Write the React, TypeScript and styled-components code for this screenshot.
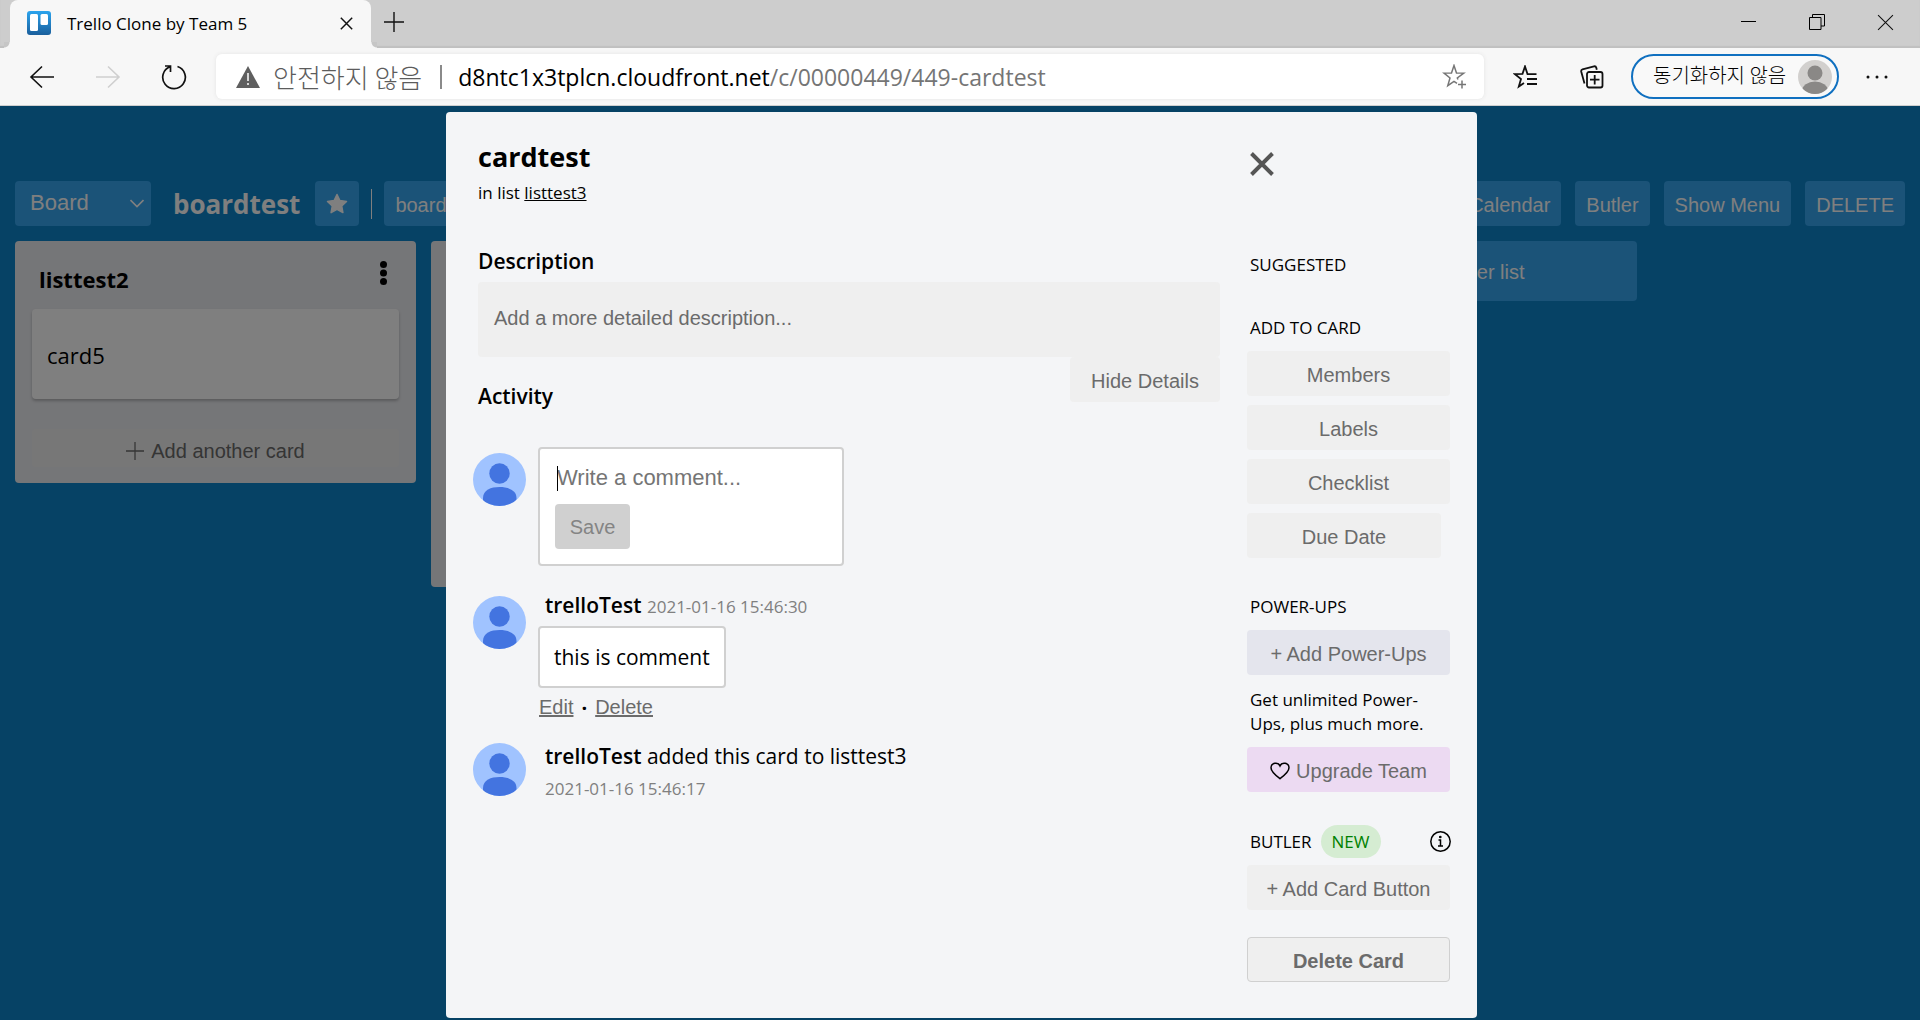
import React from 'react';
import styled, { createGlobalStyle, css } from 'styled-components';

const ui = `"Segoe UI", "Open Sans", "Noto Sans", "Noto Sans CJK KR", sans-serif`;
const arial = `"Liberation Sans", Arial, sans-serif`;

const GlobalStyle = createGlobalStyle`
  *, *::before, *::after { box-sizing: border-box; }
  body { margin: 0; font-family: ${ui}; color: #000; }
  h1, h2, h3, p { margin: 0; padding: 0; }
  button, input, select, textarea { font-family: ${arial}; font-size: 20px; margin: 0; }
  svg { display: block; flex: none; }
`;

/* ---------- browser frame ---------- */

const Window = styled.div`
  display: flex;
  flex-direction: column;
  height: 100vh;
  min-height: 0;
  overflow: hidden;
`;

const TabStrip = styled.div`
  display: flex;
  align-items: stretch;
  height: 48px;
  padding-left: 10px;
  background: #cdcdcd;
  box-shadow: inset 0 -2px 1px #c0c0c0;
`;

const Tab = styled.div`
  position: relative;
  display: flex;
  align-items: center;
  width: 361px;
  padding: 0 12px 2px 17px;
  gap: 16px;
  background: #f7f7f7;
  border-radius: 8px 8px 0 0;
  font-size: 17px;

  &::before, &::after {
    content: "";
    position: absolute;
    bottom: 0;
    width: 6px;
    height: 6px;
  }
  &::before {
    left: -6px;
    background: radial-gradient(circle at 0 0, #c6c6c6 5px, #f7f7f7 6px);
  }
  &::after {
    right: -6px;
    background: radial-gradient(circle at 100% 0, #c6c6c6 5px, #f7f7f7 6px);
  }
`;

const TabTitle = styled.span`
  flex: 1;
  white-space: nowrap;
`;

const IconButton = styled.button<{ $w: number; $h?: number }>`
  display: flex;
  align-items: center;
  justify-content: center;
  flex: none;
  width: ${(p) => p.$w}px;
  height: ${(p) => p.$h ?? 44}px;
  padding: 0;
  border: 0;
  background: none;
  color: #111;
`;

const WindowControls = styled.div`
  display: flex;
  margin-left: auto;
`;

const Toolbar = styled.div`
  display: flex;
  align-items: center;
  height: 58px;
  padding: 0 5px 0 9px;
  background: #f7f7f7;
  border-bottom: 1px solid #cfcfcf;
`;

const NavButtons = styled.div`
  display: flex;
  width: 207px;
`;

const AddressBar = styled.div`
  display: flex;
  align-items: center;
  flex: 1;
  height: 45px;
  padding: 0 6px 0 20px;
  background: #fff;
  border-radius: 6px;
  box-shadow: 0 0 4px #e4e4e4;
  font-size: 23px;
  white-space: nowrap;
`;

const Security = styled.span`
  margin-left: 13px;
  padding-right: 18px;
  border-right: 2px solid #8a8a8a;
  font-family: "Noto Sans CJK KR", sans-serif;
  font-weight: 300;
  font-size: 26px;
  line-height: 24px;
  color: #5c5c5c;
`;

const Url = styled.span`
  flex: 1;
  margin-left: 16px;
  color: #757575;
`;

const Host = styled.span`
  color: #000;
`;

const ToolbarIcons = styled.div`
  display: flex;
  padding: 0 6px 0 8px;
`;

const Profile = styled.button`
  display: flex;
  align-items: center;
  justify-content: space-between;
  width: 208px;
  height: 45px;
  padding: 0 5px 0 20px;
  border: 2px solid #1070c0;
  border-radius: 23px;
  background: #f9f9f9;
  font-family: "Noto Sans CJK KR", sans-serif;
  font-weight: 300;
  font-size: 20px;
  color: #000;
  white-space: nowrap;
`;

const ProfileName = styled.span`
  padding-bottom: 4px;
`;

/* ---------- board ---------- */

const Viewport = styled.div`
  position: relative;
  flex: 1;
  min-height: 0;
  overflow: hidden;
  background: #0c84ca;
`;

const BoardHeader = styled.header`
  display: flex;
  align-items: center;
  padding: 75px 15px 15px;
  white-space: nowrap;
`;

const translucent = css`
  border: 0;
  border-radius: 4px;
  background: #36a6f0;
  color: #fff;
`;

const SelectWrap = styled.div`
  position: relative;
  width: 136px;
  svg {
    position: absolute;
    right: 7px;
    top: 18px;
    pointer-events: none;
  }
`;

const BoardSelect = styled.select`
  ${translucent}
  appearance: none;
  width: 100%;
  height: 45px;
  padding: 0 15px 3px;
  font-size: 22px;
`;

const BoardName = styled.h1`
  margin: 0 15px 0 22px;
  padding-top: 2px;
  font-size: 26px;
  line-height: 43px;
  font-weight: 700;
  color: #fff;
`;

const BoardButton = styled.button<{ $wide?: boolean }>`
  ${translucent}
  display: flex;
  align-items: center;
  width: ${(p) => (p.$wide ? '120px' : 'auto')};
  height: 45px;
  padding: 3px 11px 0;
`;

const StarButton = styled(BoardButton)`
  padding: 0 11px;
`;

const Divider = styled.span`
  width: 1px;
  height: 30px;
  margin: 0 12px;
  background: #fff;
`;

const HeaderRight = styled.div`
  display: flex;
  gap: 14px;
  margin-left: auto;
`;

const Lists = styled.main`
  display: flex;
  align-items: flex-start;
  gap: 15px;
  padding: 0 15px;
`;

const List = styled.section<{ $tall?: boolean }>`
  flex: none;
  width: 401px;
  min-height: ${(p) => (p.$tall ? 346 : 241)}px;
  padding: 16px 17px;
  border-radius: 4px;
  background: #ebecf0;
`;

const ListTop = styled.div`
  display: flex;
  justify-content: space-between;
  height: 52px;
  padding: 4px 12px 0 7px;
`;

const ListTitle = styled.h2`
  font-size: 22px;
  line-height: 36px;
  font-weight: 700;
`;

const ListCard = styled.article`
  height: 90px;
  padding: 0 15px;
  border-radius: 4px;
  background: #fff;
  box-shadow: 0 2px 3px #b4b5b8;
  font-size: 22px;
  line-height: 92px;
`;

const AddCard = styled.button`
  display: flex;
  align-items: center;
  justify-content: center;
  gap: 7px;
  width: 100%;
  height: 38px;
  margin-top: 30px;
  padding: 6px 0 0;
  border: 0;
  border-radius: 4px;
  background: #efefef;
  color: #6a6a6a;
`;

const AddList = styled.button`
  ${translucent}
  width: 374px;
  height: 60px;
  padding: 2px 6px 0 0;
`;

/* ---------- card dialog ---------- */

const Backdrop = styled.div`
  position: absolute;
  inset: 0;
  display: flex;
  align-items: flex-start;
  justify-content: center;
  padding: 6px 0 0 3px;
  background: rgba(0, 0, 0, 0.5);
`;

const Dialog = styled.div`
  display: flex;
  gap: 27px;
  width: 1031px;
  padding: 30px 27px 36px 32px;
  border-radius: 4px;
  background: #f4f5f7;
`;

const MainColumn = styled.div`
  flex: 1;
  min-width: 0;
`;

const CardTitle = styled.h2`
  font-size: 27px;
  line-height: 30px;
  font-weight: 700;
`;

const InList = styled.p`
  margin: 9px 0 41px;
  font-size: 17px;
  line-height: 24px;
  a { color: inherit; }
`;

const SectionTitle = styled.h3`
  font-size: 21px;
  line-height: 30px;
  font-weight: 600;
`;

const Description = styled.textarea`
  display: block;
  width: 100%;
  height: 75px;
  margin-top: 6px;
  padding: 25px 16px;
  border: 0;
  border-radius: 4px;
  background: #efefef;
  resize: none;
  &::placeholder { color: #6b6b6b; }
`;

const ActivityHead = styled.div`
  display: flex;
  justify-content: space-between;
  align-items: flex-start;
  margin-bottom: 36px;
  ${SectionTitle} { padding-top: 24px; }
`;

const PlainButton = styled.button<{ $tone?: string; $short?: boolean; $strong?: boolean }>`
  display: flex;
  align-items: center;
  justify-content: center;
  gap: 6px;
  width: ${(p) => (p.$short ? '194px' : '100%')};
  height: 45px;
  padding: 3px 0 0;
  border: ${(p) => (p.$strong ? '1px solid #d0d0d0' : '0')};
  border-radius: 4px;
  background: ${(p) => p.$tone ?? '#efefef'};
  color: #6b6b6b;
  font-weight: ${(p) => (p.$strong ? 700 : 400)};
  white-space: nowrap;
  svg { color: #000; }
`;

const HideDetails = styled(PlainButton)`
  width: 150px;
`;

const Entry = styled.div`
  display: flex;
  gap: 12px;
  margin-left: -5px;
  > svg { margin-top: 6px; }
`;

const EntryBody = styled.div<{ $lower?: boolean }>`
  padding-top: ${(p) => (p.$lower ? 4 : 0)}px;
`;

const CommentForm = styled.form`
  position: relative;
  width: 306px;
  height: 119px;
  margin-bottom: 24px;
  padding: 15px;
  border: 2px solid #d0d0d0;
  border-radius: 4px;
  background: #fff;
`;

const Caret = styled.span`
  position: absolute;
  left: 17px;
  top: 17px;
  width: 1px;
  height: 25px;
  background: #000;
`;

const CommentInput = styled.input`
  display: block;
  width: 100%;
  height: 28px;
  margin-bottom: 12px;
  padding: 0 2px;
  border: 0;
  outline: 0;
  font-size: 22px;
  &::placeholder { color: #757575; }
`;

const Save = styled.button`
  width: 75px;
  height: 45px;
  padding: 1px 0 0;
  border: 0;
  border-radius: 4px;
  background: #d0d0d0;
  color: #848484;
`;

const Line = styled.p`
  padding-left: 7px;
  font-size: 21px;
  line-height: 30px;
  white-space: nowrap;
  strong { font-weight: 600; }
`;

const Time = styled.time`
  font-size: 17px;
  line-height: 24px;
  color: #808080;
`;

const TimeRow = styled.p`
  margin-top: 6px;
  padding-left: 7px;
  line-height: 24px;
`;

const Bubble = styled.p`
  width: fit-content;
  margin: 6px 0;
  padding: 14px;
  border: 2px solid #d0d0d0;
  border-radius: 4px;
  background: #fff;
  font-size: 21px;
  line-height: 30px;
`;

const Actions = styled.div`
  display: flex;
  align-items: center;
  gap: 8px;
  height: 26px;
  margin-bottom: 17px;
  padding-left: 1px;
`;

const TextButton = styled.button`
  padding: 0;
  border: 0;
  background: none;
  color: #6b6b6b;
  text-decoration: underline;
`;

const Dot = styled.span`
  font-weight: 700;
  font-size: 20px;
`;

const Side = styled.aside`
  width: 203px;
`;

const Close = styled.button`
  display: flex;
  align-items: center;
  width: 44px;
  height: 44px;
  margin-bottom: 67px;
  padding: 0 0 0 3px;
  border: 0;
  background: none;
  color: #555;
`;

const SideLabel = styled.h3`
  padding-left: 3px;
  font-size: 17px;
  line-height: 24px;
  font-weight: 400;
`;

const Group = styled.div<{ $gap: number }>`
  display: flex;
  flex-direction: column;
  gap: 9px;
  margin-bottom: ${(p) => p.$gap}px;
  ${SideLabel} { margin-bottom: 2px; }
`;

const Note = styled.p`
  padding: 4px 12px 2px 3px;
  font-size: 17px;
  line-height: 24px;
`;

const ButlerRow = styled.div`
  display: flex;
  align-items: center;
  height: 33px;
  margin: 0 -1px 7px 0;
  svg { margin-left: auto; }
`;

const NewBadge = styled.span`
  margin-left: 9px;
  padding: 0 11px;
  border-radius: 17px;
  background: #d5ecd2;
  color: #008000;
  font-size: 17px;
  line-height: 33px;
`;

const Spacer = styled.div`
  height: 27px;
`;

/* ---------- drawings ---------- */

const Cross = ({ size, width = 1.3 }: { size: number; width?: number }) => (
  <svg width={size} height={size} viewBox="0 0 16 16" stroke="currentColor" strokeWidth={width} fill="none">
    <path d="M1 1l14 14M15 1L1 15" />
  </svg>
);

const Plus = ({ size }: { size: number }) => (
  <svg width={size} height={size} viewBox="0 0 20 20" stroke="currentColor" strokeWidth="1.4" fill="none">
    <path d="M10 0v20M0 10h20" />
  </svg>
);

const Arrow = ({ flip }: { flip?: boolean }) => (
  <svg width="26" height="24" viewBox="0 0 26 24" stroke={flip ? '#cfcfcf' : '#111'} strokeWidth="1.6" fill="none">
    <path d={flip ? 'M1 12h23M13 1.500l11 10.500-11 10.500' : 'M25 12H2M13 1.500L2 12l11 10.500'} />
  </svg>
);

const Avatar = () => (
  <svg width="53" height="53" viewBox="0 0 53 53" role="img" aria-label="User avatar">
    <defs>
      <clipPath id="face"><circle cx="26.500" cy="26.500" r="26.500" /></clipPath>
    </defs>
    <g clipPath="url(#face)">
      <rect width="53" height="53" fill="#a0c3ff" />
      <circle cx="26.500" cy="20.500" r="10.200" fill="#4374e0" />
      <path d="M10 60V45c0-8 8-11 16.500-11S43.500 37 43.500 45v15z" fill="#4374e0" />
    </g>
  </svg>
);

const Favicon = () => (
  <svg width="24" height="24" viewBox="0 0 24 24">
    <defs>
      <linearGradient id="fav" x1="0" y1="0" x2="0" y2="1">
        <stop offset="0" stopColor="#2ba4ee" />
        <stop offset="1" stopColor="#1a5f9c" />
      </linearGradient>
    </defs>
    <rect width="24" height="24" rx="3" fill="url(#fav)" />
    <rect x="3" y="3" width="8" height="17" rx="1.500" fill="#fff" />
    <rect x="13.500" y="3" width="7.500" height="11" rx="1.500" fill="#fff" />
  </svg>
);

export default function App() {
  return (
    <Window>
      <GlobalStyle />
      <TabStrip>
        <Tab>
          <Favicon />
          <TabTitle>Trello Clone by Team 5</TabTitle>
          <IconButton $w={26} aria-label="Close tab"><Cross size={13} width={1.8} /></IconButton>
        </Tab>
        <IconButton $w={46} aria-label="New tab"><Plus size={20} /></IconButton>
        <WindowControls>
          <IconButton $w={68} aria-label="Minimize">
            <svg width="15" height="15" viewBox="0 0 15 15"><path d="M0 6.500h15" stroke="#000" fill="none" /></svg>
          </IconButton>
          <IconButton $w={69} aria-label="Restore">
            <svg width="16" height="16" viewBox="0 0 16 16" stroke="#000" fill="none">
              <path d="M.500 3.500h11.500v12H.500zM3.500 3.500V.500h12v11.500h-3.500" />
            </svg>
          </IconButton>
          <IconButton $w={69} aria-label="Close"><Cross size={17} width={1} /></IconButton>
        </WindowControls>
      </TabStrip>

      <Toolbar>
        <NavButtons>
          <IconButton $w={66} aria-label="Back"><Arrow /></IconButton>
          <IconButton $w={66} aria-label="Forward" disabled><Arrow flip /></IconButton>
          <IconButton $w={66} aria-label="Refresh">
            <svg width="26" height="26" viewBox="0 0 26 26" stroke="#111" strokeWidth="1.700" fill="none">
              <path d="M16.500 2.500a11.300 11.300 0 1 1-7.500.200M4 2h5.500v6" />
            </svg>
          </IconButton>
        </NavButtons>
        <AddressBar>
          <svg width="24" height="22" viewBox="0 0 24 22">
            <path d="M12 0l12 22H0z" fill="#5f5f5f" />
            <path d="M12 7v8M12 17v2" stroke="#fff" strokeWidth="1.500" />
          </svg>
          <Security>안전하지 않음</Security>
          <Url><Host>d8ntc1x3tplcn.cloudfront.net</Host>/c/00000449/449-cardtest</Url>
          <IconButton $w={48} aria-label="Add to favorites">
            <svg width="25" height="25" viewBox="0 0 25 25" stroke="#767676" strokeWidth="1.500" fill="none">
              <path d="M16 15.500l-.700-1.500 6.500-4.900-7.300-.200L12 1.500 9.500 8.900l-7.500.200 6 4.900-2.200 7.600L12 17.300l3 2" />
              <path d="M20 16.500v8M16 20.500h8" />
            </svg>
          </IconButton>
        </AddressBar>
        <ToolbarIcons>
          <IconButton $w={67} aria-label="Favorites">
            <svg width="25" height="24" viewBox="0 0 25 24" stroke="#111" strokeWidth="1.800" fill="none">
              <path d="M23.500 9.100h-9L12 1.500 9.500 8.900l-7.500.200 6 4.900-2.200 7.600L11 18M14 14h10M14 19h10" />
            </svg>
          </IconButton>
          <IconButton $w={66} aria-label="Collections">
            <svg width="24" height="24" viewBox="0 0 24 24" stroke="#111" strokeWidth="1.800" fill="none">
              <rect x="7" y="7" width="15.500" height="15.500" rx="2" />
              <path d="M14.700 10v9.500M10 14.700h9.500M4.500 18.500L1.200 6.500a2 2 0 0 1 1.300-2.200L14 1.300a2 2 0 0 1 2.300 1.500l.500 2" />
            </svg>
          </IconButton>
        </ToolbarIcons>
        <Profile>
          <ProfileName>동기화하지 않음</ProfileName>
          <svg width="34" height="34" viewBox="0 0 34 34">
            <clipPath id="guest"><circle cx="17" cy="17" r="17" /></clipPath>
            <g clipPath="url(#guest)">
              <rect width="34" height="34" fill="#d2d0ce" />
              <circle cx="17" cy="13" r="7.500" fill="#8a8886" />
              <ellipse cx="17" cy="31" rx="13" ry="9.500" fill="#8a8886" />
            </g>
          </svg>
        </Profile>
        <IconButton $w={76} aria-label="Settings and more">
          <svg width="22" height="4" viewBox="0 0 22 4" fill="#111">
            <circle cx="2" cy="2" r="1.500" /><circle cx="11" cy="2" r="1.500" /><circle cx="20" cy="2" r="1.500" />
          </svg>
        </IconButton>
      </Toolbar>

      <Viewport>
        <BoardHeader>
          <SelectWrap>
            <BoardSelect aria-label="View"><option>Board</option></BoardSelect>
            <svg width="14" height="9" viewBox="0 0 14 9" stroke="#fff" strokeWidth="1.600" fill="none">
              <path d="M.500 1L7 7.500 13.500 1" />
            </svg>
          </SelectWrap>
          <BoardName>boardtest</BoardName>
          <StarButton aria-label="Star board">
            <svg width="22" height="22" viewBox="1 1 22 22" fill="#fff" stroke="#fff" strokeWidth="1.500" strokeLinejoin="round">
              <path d="M12 2.500l2.900 6 6.600.900-4.800 4.600 1.200 6.600-5.900-3.200-5.900 3.200 1.200-6.600-4.800-4.600 6.600-.900z" />
            </svg>
          </StarButton>
          <Divider />
          <BoardButton $wide>board</BoardButton>
          <HeaderRight>
            <BoardButton>Calendar</BoardButton>
            <BoardButton>Butler</BoardButton>
            <BoardButton>Show Menu</BoardButton>
            <BoardButton>DELETE</BoardButton>
          </HeaderRight>
        </BoardHeader>
        <Lists>
          <List>
            <ListTop>
              <ListTitle>listtest2</ListTitle>
              <svg width="7" height="24" viewBox="0 0 7 24">
                <circle cx="3.500" cy="3.500" r="3.500" /><circle cx="3.500" cy="12" r="3.500" /><circle cx="3.500" cy="20.500" r="3.500" />
              </svg>
            </ListTop>
            <ListCard>card5</ListCard>
            <AddCard><Plus size={18} />Add another card</AddCard>
          </List>
          <List $tall />
          <List />
          <AddList>+ Add another list</AddList>
        </Lists>

        <Backdrop>
          <Dialog role="dialog" aria-label="cardtest">
            <MainColumn>
              <CardTitle>cardtest</CardTitle>
              <InList>in list <a href="#list">listtest3</a></InList>
              <SectionTitle>Description</SectionTitle>
              <Description aria-label="Description" placeholder="Add a more detailed description..." />
              <ActivityHead>
                <SectionTitle>Activity</SectionTitle>
                <HideDetails>Hide Details</HideDetails>
              </ActivityHead>
              <Entry>
                <Avatar />
                <CommentForm>
                  <Caret />
                  <CommentInput aria-label="Comment" placeholder="Write a comment..." />
                  <Save type="button">Save</Save>
                </CommentForm>
              </Entry>
              <Entry>
                <Avatar />
                <EntryBody>
                  <Line><strong>trelloTest</strong> <Time>2021-01-16 15:46:30</Time></Line>
                  <Bubble>this is comment</Bubble>
                  <Actions>
                    <TextButton>Edit</TextButton><Dot>·</Dot><TextButton>Delete</TextButton>
                  </Actions>
                </EntryBody>
              </Entry>
              <Entry>
                <Avatar />
                <EntryBody $lower>
                  <Line><strong>trelloTest</strong> added this card to listtest3</Line>
                  <TimeRow><Time>2021-01-16 15:46:17</Time></TimeRow>
                </EntryBody>
              </Entry>
            </MainColumn>
            <Side>
              <Close aria-label="Close card"><Cross size={24} width={2.6} /></Close>
              <Group $gap={37}>
                <SideLabel>SUGGESTED</SideLabel>
              </Group>
              <Group $gap={37}>
                <SideLabel>ADD TO CARD</SideLabel>
                <PlainButton>Members</PlainButton>
                <PlainButton>Labels</PlainButton>
                <PlainButton>Checklist</PlainButton>
                <PlainButton $short>Due Date</PlainButton>
              </Group>
              <Group $gap={33}>
                <SideLabel>POWER-UPS</SideLabel>
                <PlainButton $tone="#e4e5ed">+ Add Power-Ups</PlainButton>
                <Note>Get unlimited Power-Ups, plus much more.</Note>
                <PlainButton $tone="#ecdaf2">
                  <svg width="20" height="18" viewBox="0 0 20 18" fill="none" stroke="currentColor" strokeWidth="1.500">
                    <path d="M10 16.700C5 13 1 9.800 1 5.800A4.700 4.700 0 0 1 10 4a4.700 4.700 0 0 1 9 1.800c0 4-4 7.200-9 10.900z" />
                  </svg>
                  Upgrade Team
                </PlainButton>
              </Group>
              <ButlerRow>
                <SideLabel>BUTLER</SideLabel>
                <NewBadge>NEW</NewBadge>
                <svg width="21" height="21" viewBox="0 0 21 21" fill="none" stroke="#000" strokeWidth="1.500">
                  <circle cx="10.500" cy="10.500" r="9.700" />
                  <path d="M8.500 9h2v5.500M8 15h5" />
                  <circle cx="10.300" cy="6" r=".600" fill="#000" />
                </svg>
              </ButlerRow>
              <PlainButton>+ Add Card Button</PlainButton>
              <Spacer />
              <PlainButton $strong>Delete Card</PlainButton>
            </Side>
          </Dialog>
        </Backdrop>
      </Viewport>
    </Window>
  );
}
